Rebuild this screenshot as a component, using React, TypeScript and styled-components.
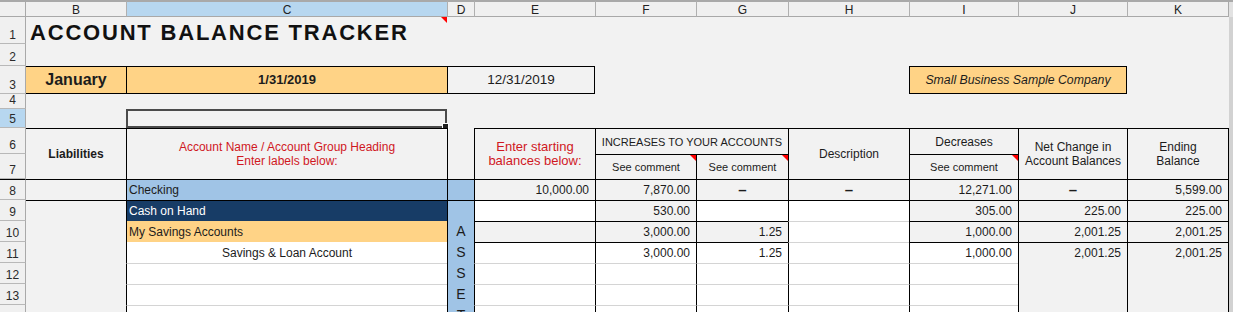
import React, { FC } from 'react';
import styled, { createGlobalStyle, css } from 'styled-components';

type Line = 'solid' | 'grid';
type Col = 'B' | 'C' | 'D' | 'E' | 'F' | 'G' | 'H' | 'I' | 'J' | 'K';

const LETTERS: Col[] = ['B', 'C', 'D', 'E', 'F', 'G', 'H', 'I', 'J', 'K'];
const colIndex = (c: Col) => LETTERS.indexOf(c) + 2;

const ORANGE = '#ffd386';
const SKY = '#a0c4e6';
const NAVY = '#173c66';
const WHITE = '#ffffff';
const RED = '#d0181f';

const edge = (l?: Line) =>
  l ? `1px solid ${l === 'solid' ? '#000' : '#d4d4d4'}` : 'none';

const App: FC = () => {
  return (
    <>
      <GlobalStyle />
      <Sheet>
        <Corner />
        {LETTERS.map((c) => (
          <ColHead key={c} $col={c} $active={c === 'C'}>
            {c}
          </ColHead>
        ))}
        <StripHead />
        <Strip />
        {Array.from({ length: 14 }, (_, i) => i + 1).map((n) => (
          <RowHead key={n} $row={n} $active={n === 5} $freeze={n === 8}>
            {n < 14 ? n : null}
          </RowHead>
        ))}

        {/* row 1 */}
        <Title $col="B" $cols={10} $row={1} $align="left">
          ACCOUNT BALANCE TRACKER
        </Title>
        <Cell $col="C" $row={1} $comment />

        {/* row 3 */}
        <Cell $col="B" $row={3} $bg={ORANGE} $top="solid" $bottom="solid" $size={16} $bold>
          January
        </Cell>
        <Cell $col="C" $row={3} $bg={ORANGE} $top="solid" $bottom="solid" $left="solid" $size={13} $bold>
          1/31/2019
        </Cell>
        <Cell $col="D" $cols={2} $row={3} $top="solid" $bottom="solid" $left="solid" $right="solid" $size={13.5}>
          12/31/2019
        </Cell>
        <Cell $col="I" $cols={2} $row={3} $bg={ORANGE} $top="solid" $bottom="solid" $left="solid" $right="solid" $size={12.3} $italic>
          Small Business Sample Company
        </Cell>

        {/* row 5 */}
        <Selection $col="C" $row={5} />

        {/* rows 6-7 : headings */}
        <Cell $col="B" $row={6} $rows={2} $top="solid" $bold>
          Liabilities
        </Cell>
        <Cell $col="C" $row={6} $rows={2} $top="solid" $left="solid" $ink={RED}>
          <Stack>
            Account Name / Account Group Heading
            <br />
            Enter labels below:
          </Stack>
        </Cell>
        <Cell $col="D" $row={6} $rows={2} $left="solid" />
        <Cell $col="E" $row={6} $rows={2} $top="solid" $left="solid" $ink={RED} $size={13}>
          <Stack>
            Enter starting
            <br />
            balances below:
          </Stack>
        </Cell>
        <Cell $col="F" $cols={2} $row={6} $top="solid" $left="solid" $size={11}>
          INCREASES TO YOUR ACCOUNTS
        </Cell>
        <Cell $col="F" $row={7} $top="solid" $left="solid" $size={11} $comment>
          See comment
        </Cell>
        <Cell $col="G" $row={7} $top="solid" $left="solid" $size={11} $comment>
          See comment
        </Cell>
        <Cell $col="H" $row={6} $rows={2} $top="solid" $left="solid">
          Description
        </Cell>
        <Cell $col="I" $row={6} $top="solid" $left="solid">
          Decreases
        </Cell>
        <Cell $col="I" $row={7} $top="solid" $left="solid" $size={11} $comment>
          See comment
        </Cell>
        <Cell $col="J" $row={6} $rows={2} $top="solid" $left="solid">
          <Stack>
            Net Change in
            <br />
            Account Balances
          </Stack>
        </Cell>
        <Cell $col="K" $row={6} $rows={2} $top="solid" $left="solid" $right="solid">
          <Stack>
            Ending
            <br />
            Balance
          </Stack>
        </Cell>

        {/* row 8 */}
        <Cell $col="B" $row={8} $top="solid" />
        <Cell $col="C" $row={8} $top="solid" $left="solid" $bg={SKY} $align="left">
          Checking
        </Cell>
        <Cell $col="D" $row={8} $top="solid" $left="solid" $bg={SKY} />
        <Cell $col="E" $row={8} $top="solid" $left="solid" $align="right">
          10,000.00
        </Cell>
        <Cell $col="F" $row={8} $top="solid" $left="solid" $align="right">
          7,870.00
        </Cell>
        <Dash $col="G" $row={8} $top="solid" $left="solid">
          –
        </Dash>
        <Dash $col="H" $row={8} $top="solid" $left="solid">
          –
        </Dash>
        <Cell $col="I" $row={8} $top="solid" $left="solid" $align="right">
          12,271.00
        </Cell>
        <Dash $col="J" $row={8} $top="solid" $left="solid">
          –
        </Dash>
        <Cell $col="K" $row={8} $top="solid" $left="solid" $right="solid" $align="right">
          5,599.00
        </Cell>

        {/* row 9 */}
        <Cell $col="B" $row={9} $rows={6} $top="solid" />
        <Cell $col="C" $row={9} $top="solid" $left="solid" $bg={NAVY} $ink="#ffffff" $align="left">
          Cash on Hand
        </Cell>
        <Letters $col="D" $row={9} $rows={6} $top="solid" $left="solid" $bg={SKY}>
          {'ASSETS'.split('').map((ch, i) => (
            <span key={i}>{ch}</span>
          ))}
        </Letters>
        <Cell $col="E" $row={9} $top="solid" $left="solid" $bg={WHITE} />
        <Cell $col="F" $row={9} $top="solid" $left="solid" $align="right">
          530.00
        </Cell>
        <Cell $col="G" $row={9} $top="solid" $left="solid" $bg={WHITE} />
        <Cell $col="H" $row={9} $top="solid" $left="solid" $bg={WHITE} />
        <Cell $col="I" $row={9} $top="solid" $left="solid" $align="right">
          305.00
        </Cell>
        <Cell $col="J" $row={9} $top="solid" $left="solid" $align="right">
          225.00
        </Cell>
        <Cell $col="K" $row={9} $top="solid" $left="solid" $right="solid" $align="right">
          225.00
        </Cell>

        {/* row 10 */}
        <Cell $col="C" $row={10} $left="solid" $bg={ORANGE} $align="left">
          My Savings Accounts
        </Cell>
        <Cell $col="E" $row={10} $top="solid" $left="solid" />
        <Cell $col="F" $row={10} $top="solid" $left="solid" $align="right">
          3,000.00
        </Cell>
        <Cell $col="G" $row={10} $top="solid" $left="solid" $align="right">
          1.25
        </Cell>
        <Cell $col="H" $row={10} $top="grid" $left="solid" $bg={WHITE} />
        <Cell $col="I" $row={10} $top="solid" $left="solid" $align="right">
          1,000.00
        </Cell>
        <Cell $col="J" $row={10} $top="solid" $left="solid" $align="right">
          2,001.25
        </Cell>
        <Cell $col="K" $row={10} $top="solid" $left="solid" $right="solid" $align="right">
          2,001.25
        </Cell>

        {/* row 11 */}
        <Cell $col="C" $row={11} $left="solid" $bg={WHITE}>
          Savings &amp; Loan Account
        </Cell>
        <Cell $col="E" $row={11} $top="solid" $left="solid" $bg={WHITE} />
        <Cell $col="F" $row={11} $top="solid" $left="solid" $bg={WHITE} $align="right">
          3,000.00
        </Cell>
        <Cell $col="G" $row={11} $top="solid" $left="solid" $bg={WHITE} $align="right">
          1.25
        </Cell>
        <Cell $col="H" $row={11} $top="grid" $left="solid" $bg={WHITE} />
        <Cell $col="I" $row={11} $top="solid" $left="solid" $bg={WHITE} $align="right">
          1,000.00
        </Cell>
        <Cell $col="J" $row={11} $top="solid" $left="solid" $align="right">
          2,001.25
        </Cell>
        <Cell $col="K" $row={11} $top="solid" $left="solid" $right="solid" $align="right">
          2,001.25
        </Cell>

        {/* rows 12-14 : empty input rows */}
        {[12, 13, 14].map((r) => (
          <React.Fragment key={r}>
            <Cell $col="C" $row={r} $top="grid" $left="solid" $bg={WHITE} />
            {(['E', 'F', 'G', 'H', 'I'] as Col[]).map((c) => (
              <Cell key={c} $col={c} $row={r} $top="grid" $left="solid" $bg={WHITE} />
            ))}
          </React.Fragment>
        ))}
        <Cell $col="J" $row={12} $rows={3} $left="solid" />
        <Cell $col="K" $row={12} $rows={3} $left="solid" $right="solid" />
      </Sheet>
    </>
  );
};

export default App;

const GlobalStyle = createGlobalStyle`
  html, body {
    margin: 0;
    padding: 0;
    background: #f2f2f2;
    overflow: hidden;
  }
  body {
    font-family: "Liberation Sans", Arial, sans-serif;
  }
`;

const Sheet = styled.div`
  display: grid;
  grid-template-columns: 26px 100px 321px 27px 121px 101px 92px 121px 109px 109px 102px 4px;
  grid-template-rows: 17px 27px 22px 28px 15px 19px 26px 25px repeat(7, 21px);
  width: 1233px;
  height: 312px;
  overflow: hidden;
  background: #f2f2f2;
  font-family: "Liberation Sans", Arial, sans-serif;
`;

const Corner = styled.div`
  grid-column: 1;
  grid-row: 1;
  box-sizing: border-box;
  background: #f0f0f0;
  border-top: 2px solid #a9a9a9;
  border-right: 1px solid #a9a9a9;
  border-bottom: 1px solid #a9a9a9;
`;

const ColHead = styled.div<{ $col: Col; $active?: boolean }>`
  grid-column: ${(p) => colIndex(p.$col)};
  grid-row: 1;
  box-sizing: border-box;
  display: flex;
  align-items: center;
  justify-content: center;
  background: ${(p) => (p.$active ? '#b7d7f0' : '#f0f0f0')};
  border-top: 2px solid #a9a9a9;
  border-bottom: 1px solid #a9a9a9;
  border-left: ${(p) => (p.$col === 'B' ? 'none' : '1px solid #b0b0b0')};
  border-right: ${(p) => (p.$col === 'K' ? '1px solid #a9a9a9' : 'none')};
  font-size: 12px;
  color: #222;
  padding-top: 1px;
`;

const StripHead = styled.div`
  grid-column: 12;
  grid-row: 1;
  background: #e2e2e2;
  border-top: 2px solid #a9a9a9;
`;

const Strip = styled.div`
  grid-column: 12;
  grid-row: 2 / -1;
  background: #d2d2d2;
`;

const RowHead = styled.div<{ $row: number; $active?: boolean; $freeze?: boolean }>`
  grid-column: 1;
  grid-row: ${(p) => p.$row + 1};
  box-sizing: border-box;
  display: flex;
  align-items: flex-end;
  justify-content: center;
  padding-bottom: 1px;
  background: ${(p) => (p.$active ? '#b7d7f0' : '#f0f0f0')};
  border-right: 1px solid #a9a9a9;
  border-bottom: 1px solid #b8b8b8;
  border-top: ${(p) => (p.$freeze ? '1px solid #000' : 'none')};
  font-size: 12px;
  line-height: 13px;
  color: #2a2a2a;
`;

interface CellProps {
  $col: Col;
  $row: number;
  $cols?: number;
  $rows?: number;
  $bg?: string;
  $top?: Line;
  $left?: Line;
  $right?: Line;
  $bottom?: Line;
  $align?: 'left' | 'center' | 'right';
  $size?: number;
  $bold?: boolean;
  $italic?: boolean;
  $ink?: string;
  $comment?: boolean;
}

const Cell = styled.div<CellProps>`
  grid-column: ${(p) => colIndex(p.$col)} / span ${(p) => p.$cols ?? 1};
  grid-row: ${(p) => p.$row + 1} / span ${(p) => p.$rows ?? 1};
  position: relative;
  box-sizing: border-box;
  display: flex;
  align-items: center;
  justify-content: ${(p) =>
    p.$align === 'left' ? 'flex-start' : p.$align === 'right' ? 'flex-end' : 'center'};
  padding: 0 ${(p) => (p.$align === 'right' ? 6 : 2)}px 0 2px;
  background: ${(p) => p.$bg ?? 'transparent'};
  border-top: ${(p) => edge(p.$top)};
  border-left: ${(p) => edge(p.$left)};
  border-right: ${(p) => edge(p.$right)};
  border-bottom: ${(p) => edge(p.$bottom)};
  font-size: ${(p) => p.$size ?? 12}px;
  font-weight: ${(p) => (p.$bold ? 700 : 400)};
  font-style: ${(p) => (p.$italic ? 'italic' : 'normal')};
  color: ${(p) => p.$ink ?? '#1c1c1c'};
  line-height: 14px;
  white-space: nowrap;

  ${(p) =>
    p.$comment &&
    css`
      &::after {
        content: '';
        position: absolute;
        top: 0;
        right: 0;
        border-top: 6px solid #ff0000;
        border-left: 6px solid transparent;
      }
    `}
`;

const Title = styled(Cell)`
  align-items: flex-end;
  padding-left: 4px;
  font-size: 22px;
  font-weight: 700;
  line-height: 22px;
  letter-spacing: 1.8px;
  color: #111;
`;

const Dash = styled(Cell)`
  font-size: 15px;
  font-weight: 700;
  padding-bottom: 1px;
`;

const Selection = styled(Cell)`
  border: 2px solid #4b4b4b;

  &::after {
    content: '';
    position: absolute;
    right: -4px;
    bottom: -4px;
    width: 5px;
    height: 5px;
    background: #222;
    border: 1px solid #fff;
  }
`;

const Letters = styled(Cell)`
  flex-direction: column;
  justify-content: flex-start;
  align-items: center;
  padding-top: 20px;
  font-size: 14px;
  line-height: 21px;

  span {
    display: block;
  }
`;

const Stack = styled.span`
  display: block;
  text-align: center;
`;
